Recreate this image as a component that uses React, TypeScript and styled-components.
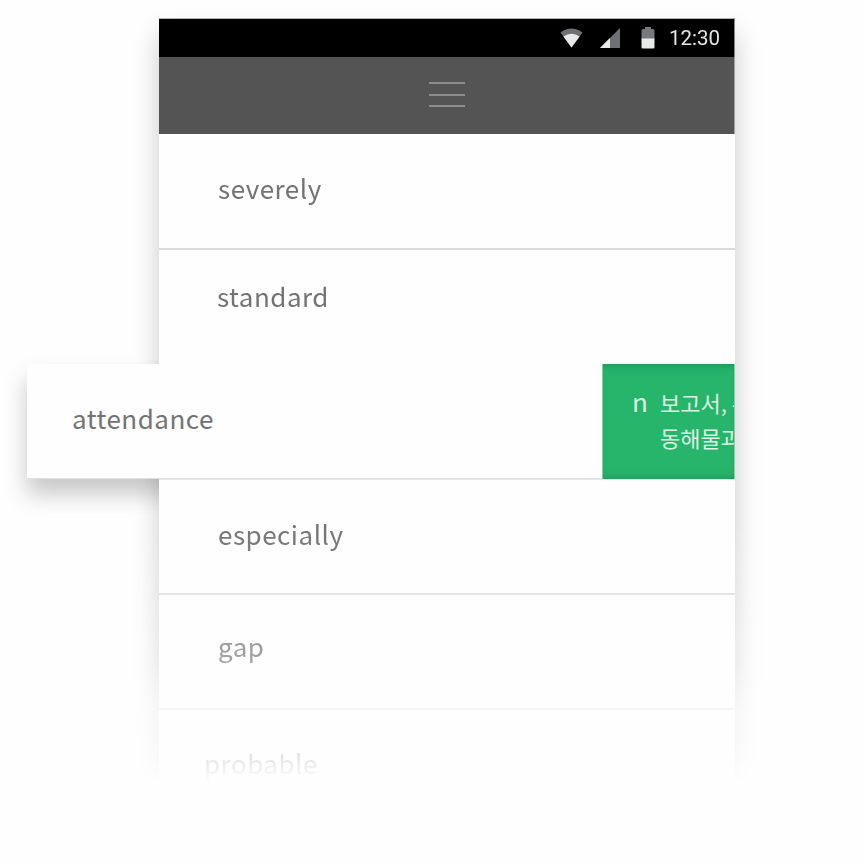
import React from "react";
import styled, { createGlobalStyle, css } from "styled-components";

const GlobalStyle = createGlobalStyle`
  body {
    margin: 0;
    background: #fefefe;
    overflow: hidden;
  }
`;

const Page = styled.main`
  box-sizing: border-box;
  width: 864px;
  height: 864px;
  padding: 18px 0 0 159px;
  overflow: hidden;
  isolation: isolate;
  font-family: "Noto Sans CJK KR", sans-serif;
  mask-image: linear-gradient(
    to bottom,
    #000 520px,
    rgba(0, 0, 0, 0.78) 620px,
    rgba(0, 0, 0, 0.64) 665px,
    rgba(0, 0, 0, 0.3) 710px,
    rgba(0, 0, 0, 0.2) 755px,
    transparent 782px
  );
`;

const Phone = styled.section`
  width: 576px;
  height: 790px;
  background: #fefefe;
  box-shadow: 0 16px 25px rgba(0, 0, 0, 0.21);
`;

const StatusBar = styled.header`
  box-sizing: border-box;
  display: flex;
  align-items: center;
  justify-content: flex-end;
  height: 39px;
  padding-right: 14px;
  background: #000;
  border-top: 1px solid #b4b5b5;
  border-right: 1px solid #858686;
`;

const StatusIcon = styled.svg<{ $gap: number }>`
  display: block;
  flex: none;
  margin-right: ${(p) => p.$gap}px;
`;

const Clock = styled.time`
  width: 51px;
  color: #e4e5e7;
  font: 400 20.5px/38px Roboto, sans-serif;
  white-space: nowrap;
`;

const Toolbar = styled.nav`
  box-sizing: border-box;
  display: flex;
  align-items: center;
  justify-content: center;
  height: 77px;
  background: #545454;
  border-right: 1px solid #a0a0a0;
`;

const MenuButton = styled.button`
  display: flex;
  flex-direction: column;
  gap: 9.5px;
  width: 36px;
  padding: 0 0 2px;
  border: 0;
  background: none;
`;

const MenuLine = styled.span`
  height: 2px;
  background: #8e8b8d;
`;

const List = styled.ul`
  margin: 0;
  padding: 0;
  list-style: none;
`;

const Row = styled.li<{
  $height: number;
  $indent: number;
  $drop: number;
  $line?: string;
  $topLine?: boolean;
}>`
  box-sizing: border-box;
  display: flex;
  height: ${(p) => p.$height}px;
  padding: ${(p) => p.$drop}px 0 0 ${(p) => p.$indent}px;
  background: #fefefe;
  border-bottom: 2px solid ${(p) => p.$line ?? "#dfdfdf"};
  box-shadow: ${(p) => (p.$topLine ? "inset 0 1px #e6e6e6" : "none")};
`;

const Label = styled.span`
  color: #737373;
  font-size: 26px;
  line-height: 40px;
  letter-spacing: 0.5px;
  white-space: nowrap;
`;

const SlidRow = styled.li`
  position: relative;
  display: flex;
  width: 708px;
  height: 115px;
  margin-left: -132px;

  &::before {
    content: "";
    position: absolute;
    z-index: -1;
    inset: 0 200px 0 0;
    box-shadow: 0 15px 22px rgba(0, 0, 0, 0.22);
  }
`;

const SlidContent = styled.div`
  box-sizing: border-box;
  flex: none;
  width: 575px;
  padding: 34px 0 0 45px;
  background: #fefefe;
  border-bottom: 1px solid #dfdfdf;
`;

const Action = styled.aside`
  box-sizing: border-box;
  display: flex;
  flex: 1;
  gap: 13px;
  min-width: 0;
  padding: 21px 0 0 29px;
  overflow: hidden;
  color: #dff2e5;
  background: #26b56b;
  border: solid #8ccba8;
  border-width: 0 1px;
  box-shadow: inset 0 9px 9px -7px #1f945b, inset 0 -9px 9px -7px #1f9d5d;
`;

const actionText = css`
  margin: 0;
  line-height: 35px;
  white-space: nowrap;
`;

const ActionMark = styled.span`
  ${actionText}
  width: 15px;
  margin-top: -2px;
  font-size: 26px;
`;

const ActionText = styled.p`
  ${actionText}
  font-size: 22px;
`;

export default function App() {
  return (
    <>
      <GlobalStyle />
      <Page>
        <Phone>
          <StatusBar>
            <StatusIcon $gap={17} width="23" height="20" viewBox="0 0 23 20">
              <path d="M.5 4.5Q11.5-3.5 22.5 4.5L11.5 19.5Z" fill="#6f7073" />
              <path d="M3.4 8.4Q11.5 3 19.6 8.4L11.5 19.5Z" fill="#e8e9eb" />
            </StatusIcon>
            <StatusIcon $gap={21} width="20" height="20" viewBox="0 0 20 20">
              <path d="M20 0V20H0Z" fill="#6f7073" />
              <path d="M10 10V20H0Z" fill="#e8e9eb" />
            </StatusIcon>
            <StatusIcon $gap={14} width="14" height="22" viewBox="0 0 14 22">
              <path
                d="M4 0H10V2H12Q13.5 2 13.5 3.5V12H.5V3.5Q.5 2 2 2H4Z"
                fill="#77787b"
              />
              <path
                d="M.5 11.5H13.5V20Q13.5 21.5 12 21.5H2Q.5 21.5 .5 20Z"
                fill="#e8e9eb"
              />
            </StatusIcon>
            <Clock>12:30</Clock>
          </StatusBar>
          <Toolbar>
            <MenuButton aria-label="Menu">
              <MenuLine />
              <MenuLine />
              <MenuLine />
            </MenuButton>
          </Toolbar>
          <List>
            <Row $height={116} $indent={59} $drop={34} $line="#dadada">
              <Label>severely</Label>
            </Row>
            <Row $height={114} $indent={58} $drop={26} $line="#fefefe">
              <Label>standard</Label>
            </Row>
            <SlidRow>
              <SlidContent>
                <Label>attendance</Label>
              </SlidContent>
              <Action>
                <ActionMark>n</ActionMark>
                <ActionText>
                  보고서, 수
                  <br />
                  동해물과
                </ActionText>
              </Action>
            </SlidRow>
            <Row $height={116} $indent={59} $drop={35} $topLine>
              <Label>especially</Label>
            </Row>
            <Row $height={115} $indent={59} $drop={31}>
              <Label>gap</Label>
            </Row>
            <Row $height={98} $indent={45} $drop={33} $line="#fefefe">
              <Label>probable</Label>
            </Row>
          </List>
        </Phone>
      </Page>
    </>
  );
}
